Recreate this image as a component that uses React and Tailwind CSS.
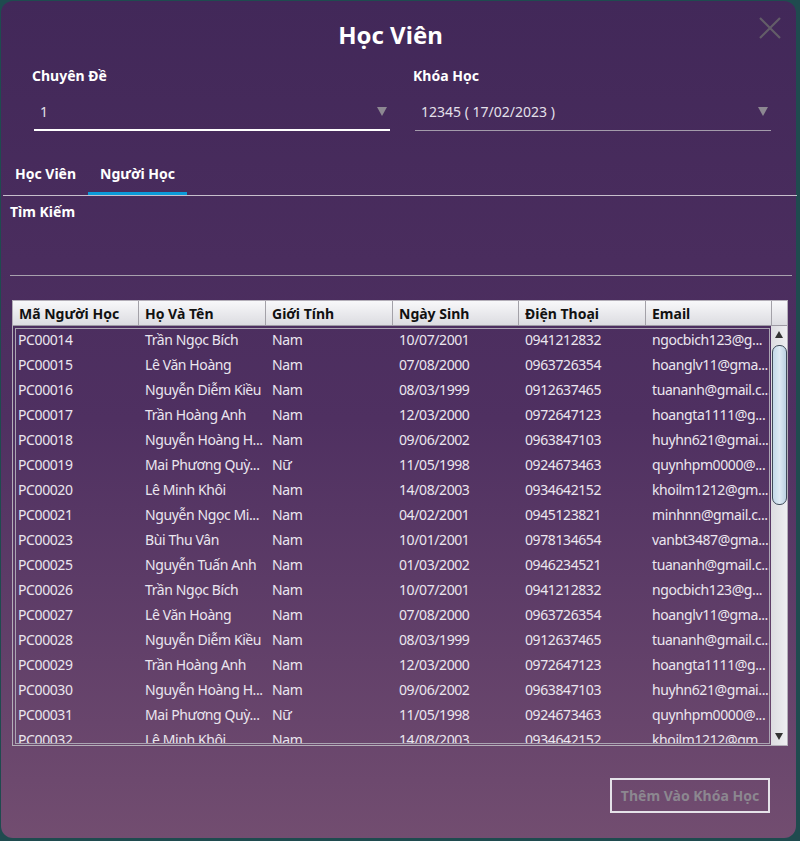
import React from "react";

const rows = [
  ["PC00014", "Trần Ngọc Bích", "Nam", "10/07/2001", "0941212832", "ngocbich123@g..."],
  ["PC00015", "Lê Văn Hoàng", "Nam", "07/08/2000", "0963726354", "hoanglv11@gma..."],
  ["PC00016", "Nguyễn Diễm Kiều", "Nam", "08/03/1999", "0912637465", "tuananh@gmail.c..."],
  ["PC00017", "Trần Hoàng Anh", "Nam", "12/03/2000", "0972647123", "hoangta1111@g..."],
  ["PC00018", "Nguyễn Hoàng H...", "Nam", "09/06/2002", "0963847103", "huyhn621@gmai..."],
  ["PC00019", "Mai Phương Quỳ...", "Nữ", "11/05/1998", "0924673463", "quynhpm0000@..."],
  ["PC00020", "Lê Minh Khôi", "Nam", "14/08/2003", "0934642152", "khoilm1212@gm..."],
  ["PC00021", "Nguyễn Ngọc Mi...", "Nam", "04/02/2001", "0945123821", "minhnn@gmail.c..."],
  ["PC00023", "Bùi Thu Vân", "Nam", "10/01/2001", "0978134654", "vanbt3487@gma..."],
  ["PC00025", "Nguyễn Tuấn Anh", "Nam", "01/03/2002", "0946234521", "tuananh@gmail.c..."],
  ["PC00026", "Trần Ngọc Bích", "Nam", "10/07/2001", "0941212832", "ngocbich123@g..."],
  ["PC00027", "Lê Văn Hoàng", "Nam", "07/08/2000", "0963726354", "hoanglv11@gma..."],
  ["PC00028", "Nguyễn Diễm Kiều", "Nam", "08/03/1999", "0912637465", "tuananh@gmail.c..."],
  ["PC00029", "Trần Hoàng Anh", "Nam", "12/03/2000", "0972647123", "hoangta1111@g..."],
  ["PC00030", "Nguyễn Hoàng H...", "Nam", "09/06/2002", "0963847103", "huyhn621@gmai..."],
  ["PC00031", "Mai Phương Quỳ...", "Nữ", "11/05/1998", "0924673463", "quynhpm0000@..."],
  ["PC00032", "Lê Minh Khôi", "Nam", "14/08/2003", "0934642152", "khoilm1212@gm..."],
];

const headers = ["Mã Người Học", "Họ Và Tên", "Giới Tính", "Ngày Sinh", "Điện Thoại", "Email"];

function Arrow() {
  return (
    <svg width="10" height="9" viewBox="0 0 10 9">
      <polygon points="0,0 10,0 5,9" fill="#8d8892" />
    </svg>
  );
}

export default function App() {
  return (
    <div
      className="w-[800px] h-[841px] bg-[#1f4b4f] pt-[1px] pl-[1px]"
      style={{ fontFamily: '"Noto Sans", "Open Sans", sans-serif' }}
    >
      <div className="relative w-[795px] h-[837px] rounded-[12px] bg-linear-to-b from-[#422859] via-[#4f3061] via-50% to-[#724d70] flex flex-col">
        {/* close */}
        <div className="absolute left-[758px] top-[16px]">
          <svg width="22" height="22" viewBox="0 0 22 22">
            <path d="M1 1 L21 21 M21 1 L1 21" stroke="#635d68" strokeWidth="2.2" fill="none" />
          </svg>
        </div>

        {/* title */}
        <div className="pt-[18px] text-center text-[24px] leading-[32px] font-bold text-white pr-[16px]">
          Học Viên
        </div>

        {/* form */}
        <div className="mt-[15px] flex pl-[31px] gap-[23px]">
          <div className="w-[358px] flex flex-col">
            <div className="text-[14px] leading-[20px] font-bold text-white">Chuyên Đề</div>
            <div className="mt-[8px] ml-[2px] h-[37px] border-b-2 border-white flex items-center justify-between pl-[6px] pr-[3px]">
              <span className="text-[14px] text-[#e4e0ea]">1</span>
              <Arrow />
            </div>
          </div>
          <div className="w-[358px] flex flex-col">
            <div className="text-[14px] leading-[20px] font-bold text-white">Khóa Học</div>
            <div className="mt-[8px] ml-[2px] h-[37px] border-b border-[#a39bab] flex items-center justify-between pl-[6px] pr-[3px] pb-[1px]">
              <span className="text-[14px] text-[#e4e0ea]">12345 ( 17/02/2023 )</span>
              <Arrow />
            </div>
          </div>
        </div>

        {/* tabs */}
        <div className="mt-[24px] ml-[2px] mr-[-1px] flex border-b border-[#c7bfcc]">
          <div className="px-[12px] pt-[9px] pb-[8px] border-b-[3px] border-transparent text-[14px] leading-[20px] font-bold text-white">
            Học Viên
          </div>
          <div className="px-[12px] pt-[9px] pb-[8px] border-b-[3px] border-[#0c9ad9] text-[14px] leading-[20px] font-bold text-white">
            Người Học
          </div>
        </div>

        {/* search */}
        <div className="mt-[6px] ml-[9px] mr-[4px]">
          <div className="text-[14px] leading-[20px] font-bold text-white">Tìm Kiếm</div>
          <div className="h-[54px] border-b border-[#a8a1ae]"></div>
        </div>

        {/* table */}
        <div className="mt-[24px] ml-[11px] w-[776px] h-[446px] border border-[#b3aeb8] flex flex-col">
          <div className="h-[25px] grid grid-cols-[126px_127px_127px_126px_127px_126px_1fr] bg-linear-to-b from-[#f8f8fa] to-[#dcdce1] border-b border-[#9d9aa3]">
            {headers.map((h) => (
              <div
                key={h}
                className="px-[6px] flex items-center text-[14px] font-bold text-[#111] border-r border-[#a3a1a8] whitespace-nowrap overflow-hidden"
              >
                {h}
              </div>
            ))}
            <div></div>
          </div>
          <div className="flex-1 flex min-h-0">
            <div className="flex-1 pt-[2px] pl-[2px] pr-[1px] pb-[1px] min-w-0">
              <div className="h-full border border-[#aaa4b2] overflow-hidden pt-[1px]">
                {rows.map((r, i) => (
                  <div
                    key={i}
                    className="h-[25px] shrink-0 grid grid-cols-[123px_127px_127px_126px_127px_126px] text-[14px] leading-[20px] tracking-[-0.4px] text-[#ebe6ef]"
                  >
                    {r.map((c, j) => (
                      <div
                        key={j}
                        className={`${j === 0 ? "pl-[2px]" : "pl-[6px]"} whitespace-nowrap overflow-hidden`}
                      >
                        {c}
                      </div>
                    ))}
                  </div>
                ))}
              </div>
            </div>
            {/* scrollbar */}
            <div className="w-[16px] bg-linear-to-r from-[#dcdce0] to-[#eeeef1] flex flex-col items-center">
              <div className="h-[16px] flex items-center justify-center">
                <svg width="8" height="7" viewBox="0 0 8 7">
                  <polygon points="4,0 8,7 0,7" fill="#333" />
                </svg>
              </div>
              <div className="mt-[3px] w-[15px] h-[160px] rounded-[7px] border border-[#3f4b5a] bg-linear-to-r from-[#c3d8e8] via-[#dde9f3] to-[#bcd1e2]"></div>
              <div className="flex-1"></div>
              <div className="h-[18px] flex items-center justify-center">
                <svg width="8" height="7" viewBox="0 0 8 7">
                  <polygon points="0,0 8,0 4,7" fill="#333" />
                </svg>
              </div>
            </div>
          </div>
        </div>

        {/* button */}
        <div className="mt-[32px] flex justify-end pr-[26px]">
          <div className="w-[160px] h-[35px] border-2 border-[#e5e2e9] flex items-center justify-center text-[14px] font-bold text-[#8c8790]">
            Thêm Vào Khóa Học
          </div>
        </div>
      </div>
    </div>
  );
}
